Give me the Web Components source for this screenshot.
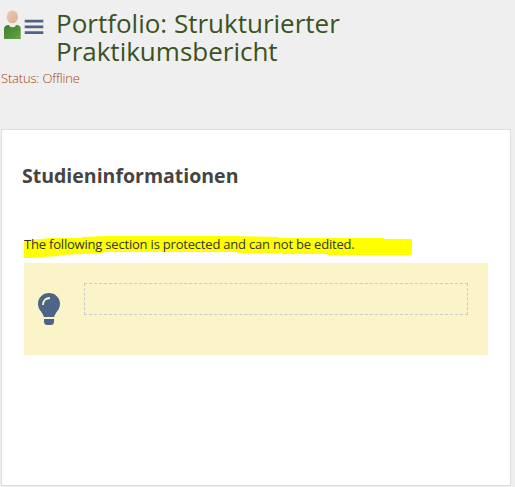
<!DOCTYPE html>
<html lang="de">
<head>
<meta charset="utf-8">
<title>Portfolio</title>
<style>
    body {
        margin: 0;
        background: #efefef;
        font-family: "Open Sans", "Noto Sans", sans-serif;
        font-size: 13px;
        color: #333;
    }
</style>
</head>
<body>
<portfolio-page>
    <page-header slot="header">
        <span slot="title">Portfolio: Strukturierter Praktikumsbericht</span>
        <span slot="status">Status: Offline</span>
    </page-header>
    <content-panel>
        <span slot="title">Studieninformationen</span>
        <marked-text>The following section is protected and can not be edited.</marked-text>
        <hint-box></hint-box>
    </content-panel>
</portfolio-page>

<script>
class BaseElement extends HTMLElement
{
    constructor()
    {
        super();
        this.attachShadow({ mode: 'open' });
    }
    connectedCallback()
    {
        const template = document.createElement('template');
        template.innerHTML = `<style>${this.getStyles()}</style>${this.getTemplate()}`;
        this.shadowRoot.appendChild(template.content.cloneNode(true));
    }
}

class PortfolioPage extends BaseElement
{
    getTemplate()
    {
        return `
            <slot name="header"></slot>
            <slot></slot>
        `;
    }
    getStyles()
    {
        return `
            :host {
                display: flex;
                flex-direction: column;
                box-sizing: border-box;
                height: 487px;
                padding: 0 4px 1px 1px;
                overflow: hidden;
            }
        `;
    }
}
customElements.define('portfolio-page', PortfolioPage);

class PageHeader extends BaseElement
{
    getTemplate()
    {
        return `
            <div class="top">
                <portfolio-icon></portfolio-icon>
                <h1><slot name="title"></slot></h1>
            </div>
            <div class="status"><slot name="status"></slot></div>
        `;
    }
    getStyles()
    {
        return `
            :host {
                display: block;
                height: 129px;
            }
            .top {
                display: flex;
                padding-top: 9px;
            }
            h1 {
                width: 330px;
                margin: 0 0 0 12px;
                font-size: 26px;
                font-weight: 400;
                line-height: 28px;
                color: #3b5223;
            }
            .status {
                margin-top: 4px;
                font-weight: 300;
                line-height: 18px;
                letter-spacing: -0.18px;
                color: #a84200;
            }
        `;
    }
}
customElements.define('page-header', PageHeader);

class PortfolioIcon extends BaseElement
{
    getTemplate()
    {
        return `
            <svg width="43" height="32" viewBox="0 0 43 32">
                <defs>
                    <linearGradient id="skin" x1="0" y1="0" x2="1" y2="1">
                        <stop offset="0" stop-color="#edc8ac"/>
                        <stop offset="1" stop-color="#dcae90"/>
                    </linearGradient>
                    <linearGradient id="shirt" x1="0" y1="0" x2="1" y2="1">
                        <stop offset="0" stop-color="#3d7c2c"/>
                        <stop offset="1" stop-color="#67a544"/>
                    </linearGradient>
                </defs>
                <path d="M3 29V18.500q.5-3.500 4.500-3.500h8q4 0 4.200 3.500V29z" fill="url(#shirt)"/>
                <path d="M7.500 14.500h8q-1 2.700-4 2.700t-4-2.700z" fill="#eef0e6"/>
                <ellipse cx="11.300" cy="6.900" rx="5.600" ry="6.400" fill="url(#skin)"/>
                <path d="M23.700 9.700h18.600v2.800H23.700zM23.700 15.500h18.600v2.800H23.700zM23.700 21.300h18.600v2.800H23.700z" fill="#4c6586"/>
            </svg>
        `;
    }
    getStyles()
    {
        return `
            :host { display: block; width: 43px; height: 32px; padding-top: 1px; }
            svg { display: block; }
        `;
    }
}
customElements.define('portfolio-icon', PortfolioIcon);

class ContentPanel extends BaseElement
{
    getTemplate()
    {
        return `
            <h2><slot name="title"></slot></h2>
            <slot></slot>
        `;
    }
    getStyles()
    {
        return `
            :host {
                display: block;
                flex: 1;
                padding: 33px 22px 0;
                background: #fff;
                border: 1px solid #ddd;
            }
            h2 {
                margin: 0 0 46px -2px;
                font-size: 19.5px;
                font-weight: 700;
                line-height: 26px;
                color: #444;
            }
        `;
    }
}
customElements.define('content-panel', ContentPanel);

class MarkedText extends BaseElement
{
    getTemplate()
    {
        return `<slot></slot>`;
    }
    getStyles()
    {
        // the highlighter stroke lies behind the text, so only the stroke is clipped
        return `
            :host {
                display: block;
                position: relative;
                width: 388px;
                height: 18px;
                line-height: 18px;
                letter-spacing: -0.2px;
                z-index: 0;
            }
            :host::before {
                content: "";
                position: absolute;
                z-index: -1;
                left: 0;
                top: 0;
                width: 388px;
                height: 24px;
                background: #ff0;
                clip-path: polygon(
                    0 5px, 18px 4px, 26px 3px, 58px 3px, 58px 2px, 82px 1px, 208px 1px, 208px 1px,
                    255px 2px, 255px 3px, 295px 3px, 360px 3px, 360px 4px, 388px 4px, 388px 20px,
                    304px 20px, 304px 19px, 258px 19px, 258px 18px, 213px 18px, 213px 17px,
                    80px 17px, 80px 18px, 35px 20px, 35px 21px, 18px 22px, 11px 23px, 0 23px
                );
            }
        `;
    }
}
customElements.define('marked-text', MarkedText);

class HintBox extends BaseElement
{
    getTemplate()
    {
        return `
            <svg width="22" height="32" viewBox="0 0 22 32">
                <path d="M11 0C4.800 0 0 4.800 0 10.800c0 3.400 1.400 5.700 3 7.800 1.400 1.900 2.300 3.600 3 5.400h10c.7-1.800 1.600-3.500 3-5.400 1.600-2.100 3-4.400 3-7.800C22 4.800 17.200 0 11 0z" fill="#4c6586"/>
                <path d="M5 12c-.1-4.300 2.700-7 7-7" fill="none" stroke="#fbf4c9" stroke-width="1.800"/>
                <path d="M6 26h10v2.500q0 3.500-3.500 3.500h-3Q6 32 6 28.500z" fill="#4c6586"/>
            </svg>
            <div class="placeholder"></div>
        `;
    }
    getStyles()
    {
        return `
            :host {
                display: flex;
                box-sizing: border-box;
                width: 464px;
                height: 92px;
                margin-top: 10px;
                padding: 20px 20px 0 14px;
                background: #fbf4c9;
            }
            svg {
                flex: none;
                margin: 10px 24px 0 0;
            }
            .placeholder {
                flex: 1;
                box-sizing: border-box;
                height: 32px;
                border: 1px dashed #c9c9cf;
            }
        `;
    }
}
customElements.define('hint-box', HintBox);
</script>
</body>
</html>
